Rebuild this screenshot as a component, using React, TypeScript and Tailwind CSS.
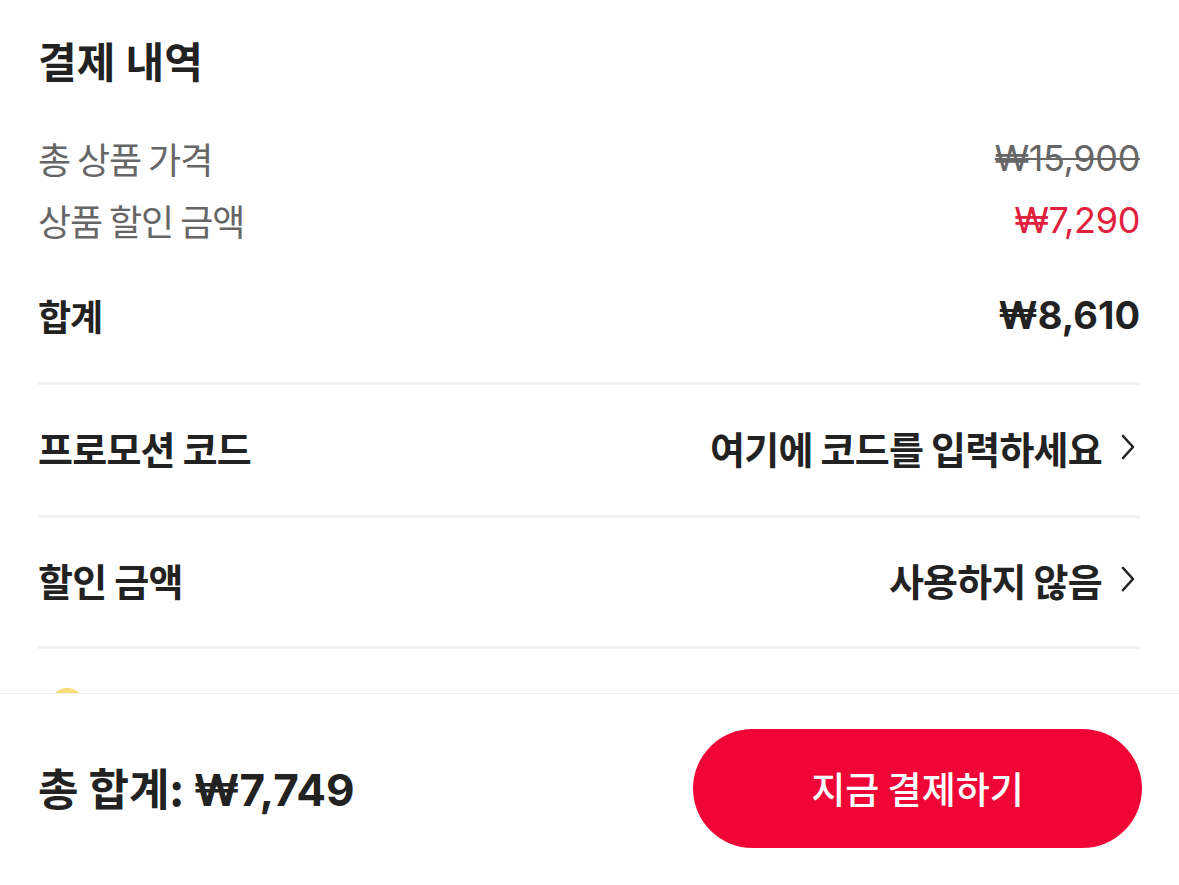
import React from "react";

function Chevron() {
  return (
    <svg width="16" height="28" viewBox="0 0 16 28" fill="none" className="shrink-0">
      <polyline points="3,3 13,14 3,25" stroke="#222" strokeWidth="2.6" strokeLinecap="round" strokeLinejoin="round" />
    </svg>
  );
}

export default function App() {
  return (
    <div className="w-[1179px] h-[885px] flex flex-col bg-white text-[#222] font-['Noto_Sans_CJK_KR',sans-serif]">
      <div className="flex-1 overflow-hidden px-[38px] pr-[39px]">
        <div className="h-[29px]" />
        <div className="h-[60px] flex items-center text-[42px] font-bold tracking-[0.005em]">결제 내역</div>
        <div className="h-[38px]" />
        <div className="h-[62px] flex items-center justify-between">
          <span className="text-[36px] text-[#666] tracking-[-0.03em]">총 상품 가격</span>
          <span className="text-[36px] text-[#666] line-through decoration-[2px] font-['Inter','Noto_Sans_CJK_KR',sans-serif] tracking-[-0.01em]">₩15,900</span>
        </div>
        <div className="h-[62px] flex items-center justify-between">
          <span className="text-[36px] text-[#666] tracking-[-0.03em]">상품 할인 금액</span>
          <span className="text-[36px] text-[#e0203c] font-['Inter','Noto_Sans_CJK_KR',sans-serif] tracking-[-0.01em]">₩7,290</span>
        </div>
        <div className="h-[33px]" />
        <div className="h-[62px] flex items-center justify-between">
          <span className="text-[36px] font-bold tracking-[-0.03em]">합계</span>
          <span className="text-[38px] font-bold font-['Inter','Noto_Sans_CJK_KR',sans-serif]">₩8,610</span>
        </div>
        <div className="h-[36px]" />
        <div className="h-[3px] bg-[#f2f2f2]" />
        <div className="h-[130px] flex items-center justify-between pb-[6px]">
          <span className="text-[38px] font-bold tracking-[-0.02em]">프로모션 코드</span>
          <span className="flex items-center gap-[18px] pr-[4px]">
            <span className="text-[38px] font-bold tracking-[-0.02em]">여기에 코드를 입력하세요</span>
            <Chevron />
          </span>
        </div>
        <div className="h-[3px] bg-[#f2f2f2]" />
        <div className="h-[128px] flex items-center justify-between pb-[6px]">
          <span className="text-[38px] font-bold tracking-[-0.02em]">할인 금액</span>
          <span className="flex items-center gap-[18px] pr-[4px]">
            <span className="text-[38px] font-bold tracking-[-0.02em]">사용하지 않음</span>
            <Chevron />
          </span>
        </div>
        <div className="h-[3px] bg-[#f2f2f2]" />
        <div className="pt-[39px] pl-[12px]">
          <div className="w-[34px] h-[34px] rounded-full bg-[#f7dd7a]" />
        </div>
      </div>
      <div className="h-[192px] shrink-0 border-t border-[#eeeeee] flex items-center justify-between pl-[38px] pr-[37px] pb-[2px]">
        <span className="text-[44px] font-bold whitespace-nowrap">
          총 합계: <span className="font-['Inter','Noto_Sans_CJK_KR',sans-serif]">₩7,749</span>
        </span>
        <button className="w-[449px] h-[119px] rounded-full bg-[#ef0637] text-white text-[37px] font-medium flex items-center justify-center">
          지금 결제하기
        </button>
      </div>
    </div>
  );
}
